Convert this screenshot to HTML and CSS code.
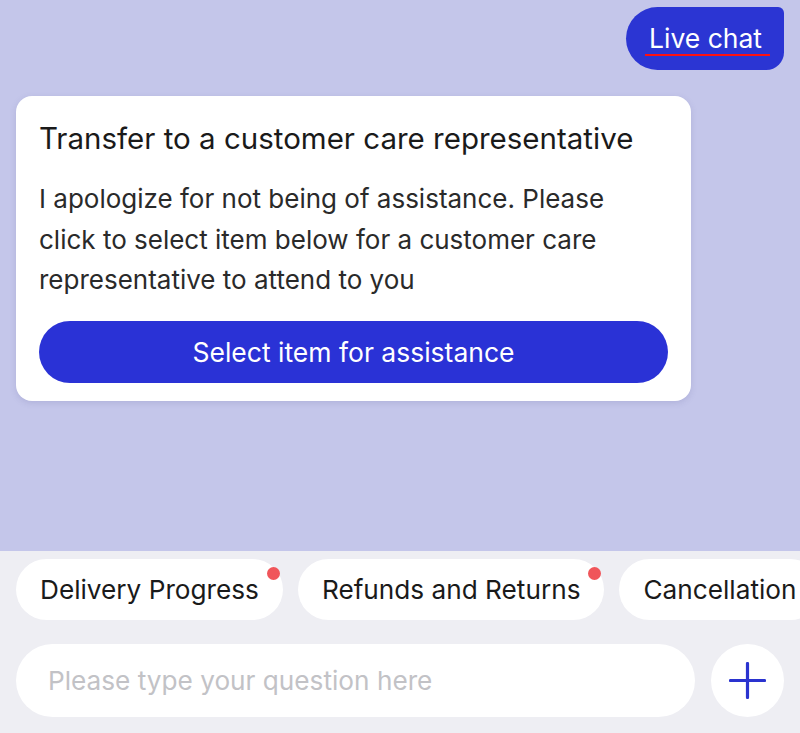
FILE: index.html
```html
<!DOCTYPE html>
<html>
<head>
<meta charset="utf-8">
<link rel="stylesheet" href="styles.css">
</head>
<body>
<div class="app">
  <main class="chat">
    <div class="row-right">
      <div class="user-bubble"><span class="user-text">Live chat</span></div>
    </div>
    <div class="card">
      <h1 class="card-title">Transfer to a customer care representative</h1>
      <p class="card-body">I apologize for not being of assistance. Please click to select item below for a customer care representative to attend to you</p>
      <button class="card-btn">Select item for assistance</button>
    </div>
  </main>
  <footer class="bottom">
    <div class="chips">
      <div class="chip">Delivery Progress<span class="dot"></span></div>
      <div class="chip">Refunds and Returns<span class="dot"></span></div>
      <div class="chip">Cancellation</div>
    </div>
    <div class="input-row">
      <div class="input">Please type your question here</div>
      <div class="plus">
        <svg width="37" height="37" viewBox="0 0 37 37"><path d="M18.5 1.5V35.5M1.5 18.5H35.5" stroke="#2a33cf" stroke-width="3.2" stroke-linecap="round" fill="none"/></svg>
      </div>
    </div>
  </footer>
</div>
</body>
</html>
```
FILE: styles.css
```css
* { box-sizing: border-box; }
html, body { margin: 0; padding: 0; }
body {
  width: 800px;
  height: 733px;
  overflow: hidden;
  font-family: Inter, "Noto Sans", sans-serif;
  color: #1e1e1e;
}
.app {
  display: flex;
  flex-direction: column;
  height: 733px;
}
.chat {
  height: 551px;
  background: #c4c6ea;
  padding: 7px 16px 0 16px;
  display: flex;
  flex-direction: column;
}
.row-right {
  display: flex;
  justify-content: flex-end;
}
.user-bubble {
  height: 63px;
  width: 158px;
  background: #2b35d3;
  border-radius: 32px 6px 18px 32px;
  display: flex;
  align-items: flex-start;
  padding: 17px 0 0 19px;
}
.user-text {
  color: #fff;
  font-size: 26.5px;
  line-height: 28px;
  padding: 0 8px 2px 4px;
  border-bottom: 2.5px solid #ff1010;
}
.card {
  margin-top: 26px;
  width: 675px;
  background: #fff;
  border-radius: 16px;
  padding: 22px 23px 18px 23px;
  box-shadow: 0 2px 6px rgba(90, 90, 150, 0.18);
}
.card-title {
  margin: 0;
  font-weight: 400;
  font-size: 29.5px;
  line-height: 40px;
  color: #1a1a1a;
  white-space: nowrap;
}
.card-body {
  margin: 21px 0 0 0;
  max-width: 580px;
  font-size: 26px;
  line-height: 40.5px;
  color: #2a2a2a;
}
.card-btn {
  margin-top: 20px;
  width: 629px;
  height: 62px;
  border: none;
  border-radius: 31px;
  background: #2a32d6;
  color: #fff;
  font-family: Inter, "Noto Sans", sans-serif;
  font-size: 26.5px;
  display: block;
  padding: 0;
}
.bottom {
  flex: 1;
  background: #eeeef3;
  padding: 8px 0 0 16px;
}
.chips {
  display: flex;
  gap: 15px;
  white-space: nowrap;
  overflow: hidden;
}
.chip {
  position: relative;
  flex: none;
  height: 61px;
  background: #fff;
  border-radius: 31px;
  padding: 0 24px;
  font-size: 26.2px;
  display: flex;
  align-items: center;
  color: #1a1a1a;
}
.dot {
  position: absolute;
  top: 8px;
  right: 3px;
  width: 13px;
  height: 13px;
  border-radius: 50%;
  background: #f0555a;
}
.input-row {
  display: flex;
  gap: 16px;
  margin-top: 24px;
}
.input {
  width: 679px;
  height: 73px;
  background: #fff;
  border-radius: 37px;
  padding-left: 32px;
  display: flex;
  align-items: center;
  font-size: 26.2px;
  color: #c2c2c6;
}
.plus {
  width: 73px;
  height: 73px;
  border-radius: 50%;
  background: #fff;
  display: flex;
  align-items: center;
  justify-content: center;
}
```
